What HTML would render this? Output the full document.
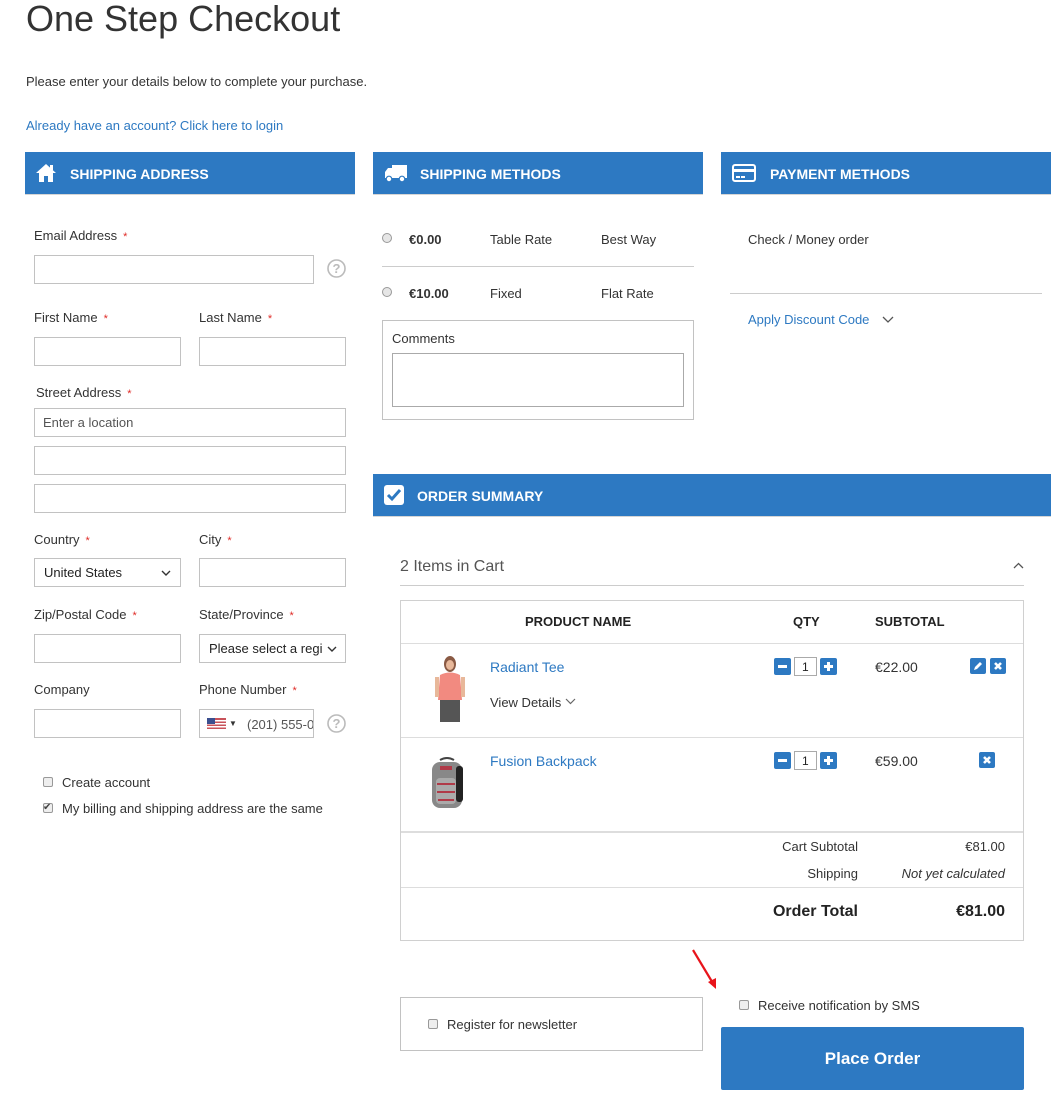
<!DOCTYPE html>
<html><head><meta charset="utf-8"><style>
*{box-sizing:border-box;margin:0;padding:0}
body{width:1059px;height:1104px;background:#fff;font-family:"Liberation Sans",sans-serif;font-size:13px;color:#333;position:relative;overflow:hidden}
.a{position:absolute;white-space:nowrap;line-height:16px;margin-top:1px}
.box{position:absolute;border:1px solid #c2c2c2;background:#fff}
.hd{position:absolute;height:43px;background:#2d79c2;border-bottom:1px solid #d5d5d5;color:#fff;font-weight:bold;font-size:14px;line-height:44px}
.req{color:#e02b27;font-size:11px;margin-left:6px}
.ln{position:absolute;height:1px;background:#ccc}
.blue{color:#2d79c2}
.cb{position:absolute;width:10px;height:10px;border:1px solid #999;border-radius:2px;background:#eee}
.rad{position:absolute;width:10px;height:10px;border:1px solid #999;border-radius:50%;background:#e6e6e6}
.sq{position:absolute;width:17px;height:17px;background:#2d79c2;border-radius:2px}
</style></head><body>
<div class="a" style="left:26px;top:-4px;font-size:36px;line-height:44px;color:#333">One Step Checkout</div>
<div class="a" style="left:26px;top:73px">Please enter your details below to complete your purchase.</div>
<div class="a blue" style="left:26px;top:117px">Already have an account? Click here to login</div>

<div class="hd" style="left:25px;top:152px;width:330px;padding-left:45px">SHIPPING ADDRESS
<svg style="position:absolute;left:10px;top:11px" width="22" height="20" viewBox="0 0 22 20"><path d="M11 1 L1 10 L4 10 L4 19 L9 19 L9 13 L13 13 L13 19 L18 19 L18 10 L21 10 Z" fill="#fff"/><rect x="15" y="2" width="3" height="5" fill="#fff"/></svg></div>
<div class="hd" style="left:373px;top:152px;width:330px;padding-left:47px">SHIPPING METHODS
<svg style="position:absolute;left:11px;top:11px" width="24" height="20" viewBox="0 0 24 20"><path d="M8 2 H23 V15 H1 V9 L4 5 H8 Z" fill="#fff"/><circle cx="5" cy="16" r="2.8" fill="#fff" stroke="#2d79c2" stroke-width="1.2"/><circle cx="18" cy="16" r="2.8" fill="#fff" stroke="#2d79c2" stroke-width="1.2"/></svg></div>
<div class="hd" style="left:721px;top:152px;width:330px;padding-left:49px">PAYMENT METHODS
<svg style="position:absolute;left:11px;top:11px" width="24" height="20" viewBox="0 0 24 20"><rect x="1" y="2" width="22" height="16" rx="2" fill="none" stroke="#fff" stroke-width="2"/><rect x="1" y="6" width="22" height="3" fill="#fff"/><rect x="4" y="13" width="4" height="2" fill="#fff"/><rect x="9" y="13" width="4" height="2" fill="#fff"/></svg></div>
<div class="hd" style="left:373px;top:474px;width:678px;padding-left:44px">ORDER SUMMARY
<svg style="position:absolute;left:11px;top:11px" width="20" height="20" viewBox="0 0 20 20"><rect x="0" y="0" width="20" height="20" rx="3" fill="#fff"/><path d="M4 10 L8 14 L16 5" fill="none" stroke="#2d79c2" stroke-width="3"/></svg></div>

<div class="a" style="left:34px;top:227px">Email Address<span class="req">*</span></div>
<div class="box" style="left:34px;top:255px;width:280px;height:29px"></div>
<svg style="position:absolute;left:327px;top:259px" width="19" height="19" viewBox="0 0 19 19"><circle cx="9.5" cy="9.5" r="8.5" fill="none" stroke="#bbb" stroke-width="1.6"/><text x="9.5" y="14" text-anchor="middle" font-size="13" font-family="Liberation Sans" font-weight="bold" fill="#bbb">?</text></svg>
<div class="a" style="left:34px;top:309px">First Name<span class="req">*</span></div>
<div class="a" style="left:199px;top:309px">Last Name<span class="req">*</span></div>
<div class="box" style="left:34px;top:337px;width:147px;height:29px"></div>
<div class="box" style="left:199px;top:337px;width:147px;height:29px"></div>
<div class="a" style="left:36px;top:384px">Street Address<span class="req">*</span></div>
<div class="box" style="left:34px;top:408px;width:312px;height:29px"></div>
<div class="a" style="left:43px;top:414px;color:#555">Enter a location</div>
<div class="box" style="left:34px;top:446px;width:312px;height:29px"></div>
<div class="box" style="left:34px;top:484px;width:312px;height:29px"></div>
<div class="a" style="left:34px;top:531px">Country<span class="req">*</span></div>
<div class="a" style="left:199px;top:531px">City<span class="req">*</span></div>
<div class="box" style="left:34px;top:558px;width:147px;height:29px"></div>
<div class="a" style="left:44px;top:564px;color:#222">United States</div>
<svg style="position:absolute;left:161px;top:570px" width="10" height="7" viewBox="0 0 10 7"><path d="M1 1 L5 5 L9 1" fill="none" stroke="#333" stroke-width="1.4"/></svg>
<div class="box" style="left:199px;top:558px;width:147px;height:29px"></div>
<div class="a" style="left:34px;top:606px">Zip/Postal Code<span class="req">*</span></div>
<div class="a" style="left:199px;top:606px">State/Province<span class="req">*</span></div>
<div class="box" style="left:34px;top:634px;width:147px;height:29px"></div>
<div class="box" style="left:199px;top:634px;width:147px;height:29px;overflow:hidden"><div class="a" style="left:9px;top:5px;color:#222;width:114px;overflow:hidden">Please select a region</div></div>
<svg style="position:absolute;left:327px;top:646px" width="10" height="7" viewBox="0 0 10 7"><path d="M1 1 L5 5 L9 1" fill="none" stroke="#333" stroke-width="1.4"/></svg>
<div class="a" style="left:34px;top:681px">Company</div>
<div class="a" style="left:199px;top:681px">Phone Number<span class="req">*</span></div>
<div class="box" style="left:34px;top:709px;width:147px;height:29px"></div>
<div class="box" style="left:199px;top:709px;width:115px;height:29px;overflow:hidden">
<svg style="position:absolute;left:7px;top:8px" width="19" height="11" viewBox="0 0 19 11"><rect width="19" height="11" fill="#c8525a"/><rect y="2" width="19" height="1.5" fill="#fff"/><rect y="5" width="19" height="1.5" fill="#fff"/><rect y="8" width="19" height="1.5" fill="#fff"/><rect width="8" height="6" fill="#3b4f8f"/></svg>
<div class="a" style="left:29px;top:5px;font-size:8px">▼</div>
<div class="a" style="left:47px;top:6px;color:#555">(201) 555-0123</div></div>
<svg style="position:absolute;left:327px;top:714px" width="19" height="19" viewBox="0 0 19 19"><circle cx="9.5" cy="9.5" r="8.5" fill="none" stroke="#bbb" stroke-width="1.6"/><text x="9.5" y="14" text-anchor="middle" font-size="13" font-family="Liberation Sans" font-weight="bold" fill="#bbb">?</text></svg>
<div class="cb" style="left:43px;top:777px"></div>
<div class="a" style="left:62px;top:774px">Create account</div>
<div class="cb" style="left:43px;top:803px"></div>
<div class="a" style="left:43px;top:799px;font-size:10px;color:#444">✔</div>
<div class="a" style="left:62px;top:800px">My billing and shipping address are the same</div>

<div class="rad" style="left:382px;top:233px"></div>
<div class="a" style="left:409px;top:231px;font-weight:bold">€0.00</div>
<div class="a" style="left:490px;top:231px">Table Rate</div>
<div class="a" style="left:601px;top:231px">Best Way</div>
<div class="ln" style="left:382px;top:266px;width:312px"></div>
<div class="rad" style="left:382px;top:287px"></div>
<div class="a" style="left:409px;top:285px;font-weight:bold">€10.00</div>
<div class="a" style="left:490px;top:285px">Fixed</div>
<div class="a" style="left:601px;top:285px">Flat Rate</div>
<div class="box" style="left:382px;top:320px;width:312px;height:100px"></div>
<div class="a" style="left:392px;top:330px">Comments</div>
<div class="box" style="left:392px;top:353px;width:292px;height:54px;border-color:#aaa"></div>

<div class="a" style="left:748px;top:231px">Check / Money order</div>
<div class="ln" style="left:730px;top:293px;width:312px"></div>
<div class="a blue" style="left:748px;top:311px">Apply Discount Code</div>
<svg style="position:absolute;left:882px;top:316px" width="12" height="8" viewBox="0 0 12 8"><path d="M1 1 L6 6 L11 1" fill="none" stroke="#555" stroke-width="1.3"/></svg>

<div class="a" style="left:400px;top:557px;font-size:16px;line-height:18px;color:#555">2 Items in Cart</div>
<svg style="position:absolute;left:1013px;top:562px" width="11" height="7" viewBox="0 0 11 7"><path d="M1 6 L5.5 1.5 L10 6" fill="none" stroke="#555" stroke-width="1.3"/></svg>
<div class="ln" style="left:400px;top:585px;width:624px"></div>
<div class="box" style="left:400px;top:600px;width:624px;height:341px;background:none;border-color:#d0d0d0"></div>
<div class="a" style="left:525px;top:613px;font-weight:bold;color:#222">PRODUCT NAME</div>
<div class="a" style="left:793px;top:613px;font-weight:bold;color:#222">QTY</div>
<div class="a" style="left:875px;top:613px;font-weight:bold;color:#222">SUBTOTAL</div>
<div class="ln" style="left:401px;top:643px;width:622px;background:#ddd"></div>
<svg style="position:absolute;left:430px;top:655px" width="40" height="70" viewBox="0 0 40 70"><ellipse cx="20" cy="9" rx="6" ry="8" fill="#8a5a44"/><ellipse cx="20" cy="10" rx="4" ry="5" fill="#e8b89a"/><path d="M10 20 Q20 15 30 20 L32 45 L8 45 Z" fill="#f28a80"/><rect x="10" y="45" width="20" height="22" fill="#555"/><rect x="5" y="22" width="4" height="20" fill="#e8b89a"/><rect x="31" y="22" width="4" height="20" fill="#e8b89a"/></svg>
<div class="a blue" style="left:490px;top:658px;font-size:14px">Radiant Tee</div>
<div class="a" style="left:490px;top:694px">View Details</div>
<svg style="position:absolute;left:565px;top:698px" width="11" height="7" viewBox="0 0 11 7"><path d="M1 1 L5.5 5.5 L10 1" fill="none" stroke="#666" stroke-width="1.2"/></svg>
<div class="sq" style="left:774px;top:658px"><div style="position:absolute;left:4px;top:7px;width:9px;height:3px;background:#fff"></div></div>
<div class="box" style="left:794px;top:657px;width:23px;height:19px;border-color:#aaa"><div class="a" style="left:7px;top:0px;font-size:12px;color:#222">1</div></div>
<div class="sq" style="left:820px;top:658px"><div style="position:absolute;left:4px;top:7px;width:9px;height:3px;background:#fff"></div><div style="position:absolute;left:7px;top:4px;width:3px;height:9px;background:#fff"></div></div>
<div class="a" style="left:875px;top:658px;font-size:14px">€22.00</div>
<div class="sq" style="left:970px;top:658px;width:16px;height:16px"><svg width="16" height="16" viewBox="0 0 16 16"><path d="M4 12 L5 9 L10 4 L12 6 L7 11 Z" fill="#fff"/></svg></div>
<div class="sq" style="left:990px;top:658px;width:16px;height:16px"><svg width="16" height="16" viewBox="0 0 16 16"><path d="M5 5 L11 11 M11 5 L5 11" stroke="#fff" stroke-width="2.6"/></svg></div>
<div class="ln" style="left:401px;top:737px;width:622px;background:#ddd"></div>
<svg style="position:absolute;left:426px;top:756px" width="42" height="54" viewBox="0 0 42 54"><path d="M14 4 Q21 0 28 4" fill="none" stroke="#444" stroke-width="2"/><rect x="6" y="6" width="30" height="46" rx="8" fill="#888"/><rect x="30" y="10" width="7" height="36" rx="3" fill="#222"/><rect x="10" y="22" width="20" height="26" rx="4" fill="#aaa"/><path d="M11 28 H29 M11 36 H29 M12 44 H28" stroke="#b03a48" stroke-width="2"/><rect x="14" y="10" width="12" height="4" fill="#b03a48"/></svg>
<div class="a blue" style="left:490px;top:752px;font-size:14px">Fusion Backpack</div>
<div class="sq" style="left:774px;top:752px"><div style="position:absolute;left:4px;top:7px;width:9px;height:3px;background:#fff"></div></div>
<div class="box" style="left:794px;top:751px;width:23px;height:19px;border-color:#aaa"><div class="a" style="left:7px;top:0px;font-size:12px;color:#222">1</div></div>
<div class="sq" style="left:820px;top:752px"><div style="position:absolute;left:4px;top:7px;width:9px;height:3px;background:#fff"></div><div style="position:absolute;left:7px;top:4px;width:3px;height:9px;background:#fff"></div></div>
<div class="a" style="left:875px;top:752px;font-size:14px">€59.00</div>
<div class="sq" style="left:979px;top:752px;width:16px;height:16px"><svg width="16" height="16" viewBox="0 0 16 16"><path d="M5 5 L11 11 M11 5 L5 11" stroke="#fff" stroke-width="2.6"/></svg></div>
<div class="ln" style="left:401px;top:831px;width:622px;height:2px;background:#ddd"></div>
<div class="a" style="right:201px;top:838px">Cart Subtotal</div>
<div class="a" style="right:54px;top:838px">€81.00</div>
<div class="a" style="right:201px;top:865px">Shipping</div>
<div class="a" style="right:54px;top:865px;font-style:italic">Not yet calculated</div>
<div class="ln" style="left:401px;top:887px;width:622px;background:#ddd"></div>
<div class="a" style="right:201px;top:901px;font-size:16px;line-height:20px;font-weight:bold;color:#222">Order Total</div>
<div class="a" style="right:54px;top:901px;font-size:16px;line-height:20px;font-weight:bold;color:#222">€81.00</div>

<svg style="position:absolute;left:686px;top:945px" width="36" height="48" viewBox="0 0 36 48"><path d="M7 5 L28 40" stroke="#e8141b" stroke-width="2.2"/><path d="M30 44 L22 37 L30 33 Z" fill="#e8141b"/></svg>

<div class="box" style="left:400px;top:997px;width:303px;height:54px"></div>
<div class="cb" style="left:428px;top:1019px"></div>
<div class="a" style="left:447px;top:1016px">Register for newsletter</div>
<div class="cb" style="left:739px;top:1000px"></div>
<div class="a" style="left:758px;top:997px">Receive notification by SMS</div>
<div style="position:absolute;left:721px;top:1027px;width:303px;height:63px;background:#2d79c2;border-radius:2px;color:#fff;font-weight:bold;font-size:17px;line-height:64px;text-align:center">Place Order</div>
</body></html>
